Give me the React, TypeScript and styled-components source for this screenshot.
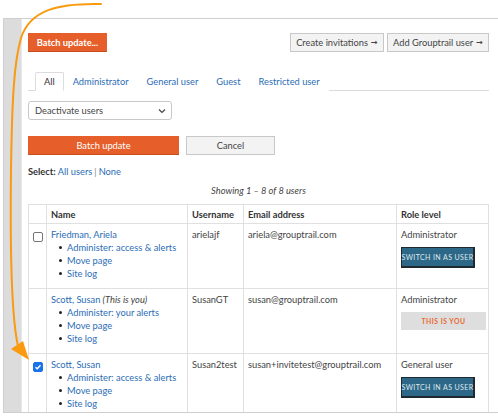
import React from 'react'
import styled, { createGlobalStyle } from 'styled-components'

const GlobalStyle = createGlobalStyle`
    html, body {
        margin: 0;
        padding: 0;
        background: #fff;
    }
    body {
        font-family: Lato, "Liberation Sans", sans-serif;
        font-size: 9.3px;
        color: #333;
    }
`

const Page = styled.div`
    position: relative;
    width: 498px;
    height: 417px;
    padding: 18px 0 0 3px;
    box-sizing: border-box;
    overflow: hidden;
`

const Frame = styled.div`
    display: flex;
    height: 395px;
    border: 1px solid #cfcfcf;
    border-right: none;
    box-sizing: border-box;
    overflow: hidden;
`

const Strip = styled.div`
    width: 17px;
    flex: none;
    background: #dcdcdc;
    border-right: 1px solid #e8e8e8;
`

const Content = styled.div`
    flex: 1;
    padding: 14px 9px 0 6px;
    background: #fff;
`

const TopBar = styled.div`
    display: flex;
    align-items: center;
    gap: 3px;
`

const Spacer = styled.div`
    flex: 1;
`

const OrangeButton = styled.div<{ width?: number; bold?: boolean }>`
    height: 19px;
    width: ${p => (p.width ? `${p.width}px` : '79px')};
    box-sizing: border-box;
    display: flex;
    align-items: center;
    justify-content: center;
    background: #e65f2b;
    color: #fff;
    font-weight: ${p => (p.bold ? 700 : 400)};
    border-bottom: 1px solid #c94c1c;
`

const GrayButton = styled.div<{ width: number }>`
    height: 19px;
    width: ${p => p.width}px;
    box-sizing: border-box;
    display: flex;
    align-items: center;
    justify-content: center;
    gap: 3px;
    background: #f3f3f3;
    border: 1px solid #c8c8c8;
    color: #444;
`

const Arrow = styled.span`
    font-family: "DejaVu Sans", sans-serif;
    font-size: 8px;
    font-weight: 700;
`

const Tabs = styled.div`
    margin-top: 20px;
    display: flex;
    padding-left: 7px;
    border-bottom: 1px solid #dcdcdc;
`

const Tab = styled.div<{ active?: boolean }>`
    height: 19px;
    box-sizing: border-box;
    display: flex;
    align-items: center;
    padding: 0 ${p => (p.active ? 8 : 8)}px;
    margin-bottom: -1px;
    color: ${p => (p.active ? '#333' : '#2b6db5')};
    background: #fff;
    border: 1px solid ${p => (p.active ? '#dcdcdc' : 'transparent')};
    border-bottom-color: ${p => (p.active ? '#fff' : 'transparent')};
    border-radius: 2px 2px 0 0;
`

const SelectBox = styled.div`
    margin-top: 10px;
    width: 144px;
    height: 19px;
    box-sizing: border-box;
    border: 1px solid #c8c8c8;
    border-radius: 3px;
    display: flex;
    align-items: center;
    justify-content: space-between;
    padding: 0 5px 0 6px;
    color: #444;
`

const ActionRow = styled.div`
    margin-top: 16px;
    display: flex;
    gap: 7px;
`

const SelectLine = styled.div`
    margin-top: 11px;
    line-height: 12px;
    color: #333;
`

const Bold = styled.span`
    font-weight: 700;
`

const Link = styled.span`
    color: #2b6db5;
`

const Pipe = styled.span`
    color: #888;
    margin: 0 2px;
`

const Showing = styled.div`
    margin-top: 7px;
    text-align: center;
    font-style: italic;
    color: #444;
    line-height: 12px;
`

const Table = styled.table`
    margin-top: 7px;
    width: 460px;
    border-collapse: collapse;
    table-layout: fixed;
`

const Th = styled.th`
    height: 18px;
    padding: 0 4px;
    text-align: left;
    font-weight: 700;
    color: #333;
    border: 1px solid #e0e0e0;
`

const Td = styled.td`
    vertical-align: top;
    padding: 4px 4px 8px;
    line-height: 13px;
    border: 1px solid #e0e0e0;
    color: #444;
    white-space: nowrap;
`

const CheckCell = styled.td`
    vertical-align: top;
    padding: 8px 0 0 4px;
    border: 1px solid #e0e0e0;
`

const Box = styled.div<{ checked?: boolean }>`
    width: 10px;
    height: 10px;
    box-sizing: border-box;
    border-radius: 2px;
    border: 1px solid ${p => (p.checked ? '#1a73e8' : '#767676')};
    background: ${p => (p.checked ? '#1a73e8' : '#fff')};
    display: flex;
    align-items: center;
    justify-content: center;
`

const Actions = styled.ul`
    margin: 0;
    padding: 0 0 0 16px;
    list-style: none;
`

const Action = styled.li`
    position: relative;
    color: #2b6db5;
    &::before {
        content: '';
        position: absolute;
        left: -8px;
        top: 5px;
        width: 3px;
        height: 3px;
        border-radius: 50%;
        background: #222;
    }
`

const Note = styled.span`
    font-style: italic;
    color: #444;
`

const SwitchButton = styled.div`
    margin-top: 6px;
    width: 74px;
    height: 21px;
    box-sizing: border-box;
    background: #2e6888;
    border: 1px solid #1e2a30;
    border-width: 1px 2px 2px 1px;
    color: #dfe8ee;
    font-size: 7px;
    letter-spacing: 0.4px;
    display: flex;
    align-items: center;
    justify-content: center;
`

const YouBadge = styled.div`
    margin-top: 6px;
    width: 85px;
    height: 18px;
    background: #dedede;
    color: #e8692f;
    font-size: 6.8px;
    font-weight: 700;
    letter-spacing: 0.5px;
    display: flex;
    align-items: center;
    justify-content: center;
`

const Overlay = styled.svg`
    position: absolute;
    left: 0;
    top: 0;
    pointer-events: none;
`

type User = {
    name: string
    you?: boolean
    username: string
    email: string
    role: string
    checked?: boolean
}

const users: User[] = [
    { name: 'Friedman, Ariela', username: 'arielajf', email: 'ariela@grouptrail.com', role: 'Administrator' },
    { name: 'Scott, Susan', you: true, username: 'SusanGT', email: 'susan@grouptrail.com', role: 'Administrator' },
    { name: 'Scott, Susan', username: 'Susan2test', email: 'susan+invitetest@grouptrail.com', role: 'General user', checked: true },
]

function Check({ checked }: { checked?: boolean }) {
    return (
        <Box checked={checked}>
            {checked && (
                <svg width="8" height="8" viewBox="0 0 8 8">
                    <path d="M1.5 4.2 L3.2 5.8 L6.5 2.2" stroke="#fff" strokeWidth="1.4" fill="none" />
                </svg>
            )}
        </Box>
    )
}

export default function App() {
    return (
        <Page>
            <GlobalStyle />
            <Frame>
                <Strip />
                <Content>
                    <TopBar>
                        <OrangeButton bold>Batch update...</OrangeButton>
                        <Spacer />
                        <GrayButton width={94}>Create invitations <Arrow>→</Arrow></GrayButton>
                        <GrayButton width={102}>Add Grouptrail user <Arrow>→</Arrow></GrayButton>
                    </TopBar>

                    <Tabs>
                        <Tab active>All</Tab>
                        <Tab>Administrator</Tab>
                        <Tab>General user</Tab>
                        <Tab>Guest</Tab>
                        <Tab>Restricted user</Tab>
                    </Tabs>

                    <SelectBox>
                        <span>Deactivate users</span>
                        <svg width="8" height="6" viewBox="0 0 8 6">
                            <path d="M1 1.5 L4 4.5 L7 1.5" stroke="#444" strokeWidth="1.2" fill="none" />
                        </svg>
                    </SelectBox>

                    <ActionRow>
                        <OrangeButton width={151}>Batch update</OrangeButton>
                        <GrayButton width={89}>Cancel</GrayButton>
                    </ActionRow>

                    <SelectLine>
                        <Bold>Select:</Bold> <Link>All users</Link>
                        <Pipe>|</Pipe>
                        <Link>None</Link>
                    </SelectLine>

                    <Showing>Showing 1 – 8 of 8 users</Showing>

                    <Table>
                        <colgroup>
                            <col style={{ width: 18 }} />
                            <col style={{ width: 141 }} />
                            <col style={{ width: 56 }} />
                            <col style={{ width: 153 }} />
                            <col style={{ width: 92 }} />
                        </colgroup>
                        <thead>
                            <tr>
                                <Th />
                                <Th>Name</Th>
                                <Th>Username</Th>
                                <Th>Email address</Th>
                                <Th>Role level</Th>
                            </tr>
                        </thead>
                        <tbody>
                            {users.map((u, i) => (
                                <tr key={i}>
                                    <CheckCell>{!u.you && <Check checked={u.checked} />}</CheckCell>
                                    <Td>
                                        <Link>{u.name}</Link>
                                        {u.you && <Note> (This is you)</Note>}
                                        <Actions>
                                            <Action>{u.you ? 'Administer: your alerts' : 'Administer: access & alerts'}</Action>
                                            <Action>Move page</Action>
                                            <Action>Site log</Action>
                                        </Actions>
                                    </Td>
                                    <Td>{u.username}</Td>
                                    <Td>{u.email}</Td>
                                    <Td>
                                        {u.role}
                                        {u.you ? <YouBadge>THIS IS YOU</YouBadge> : <SwitchButton>SWITCH IN AS USER</SwitchButton>}
                                    </Td>
                                </tr>
                            ))}
                        </tbody>
                    </Table>
                </Content>
            </Frame>

            <Overlay width="498" height="417" viewBox="0 0 498 417">
                <path
                    d="M101 4 C 58 3, 30 10, 21 38 C 14 62, 12 100, 11 170 C 10 250, 11 315, 18 346"
                    stroke="#f99a10"
                    strokeWidth="2"
                    fill="none"
                    strokeLinecap="round"
                />
                <polygon points="11,349 23,341 29,360" fill="#f99a10" />
            </Overlay>
        </Page>
    )
}
